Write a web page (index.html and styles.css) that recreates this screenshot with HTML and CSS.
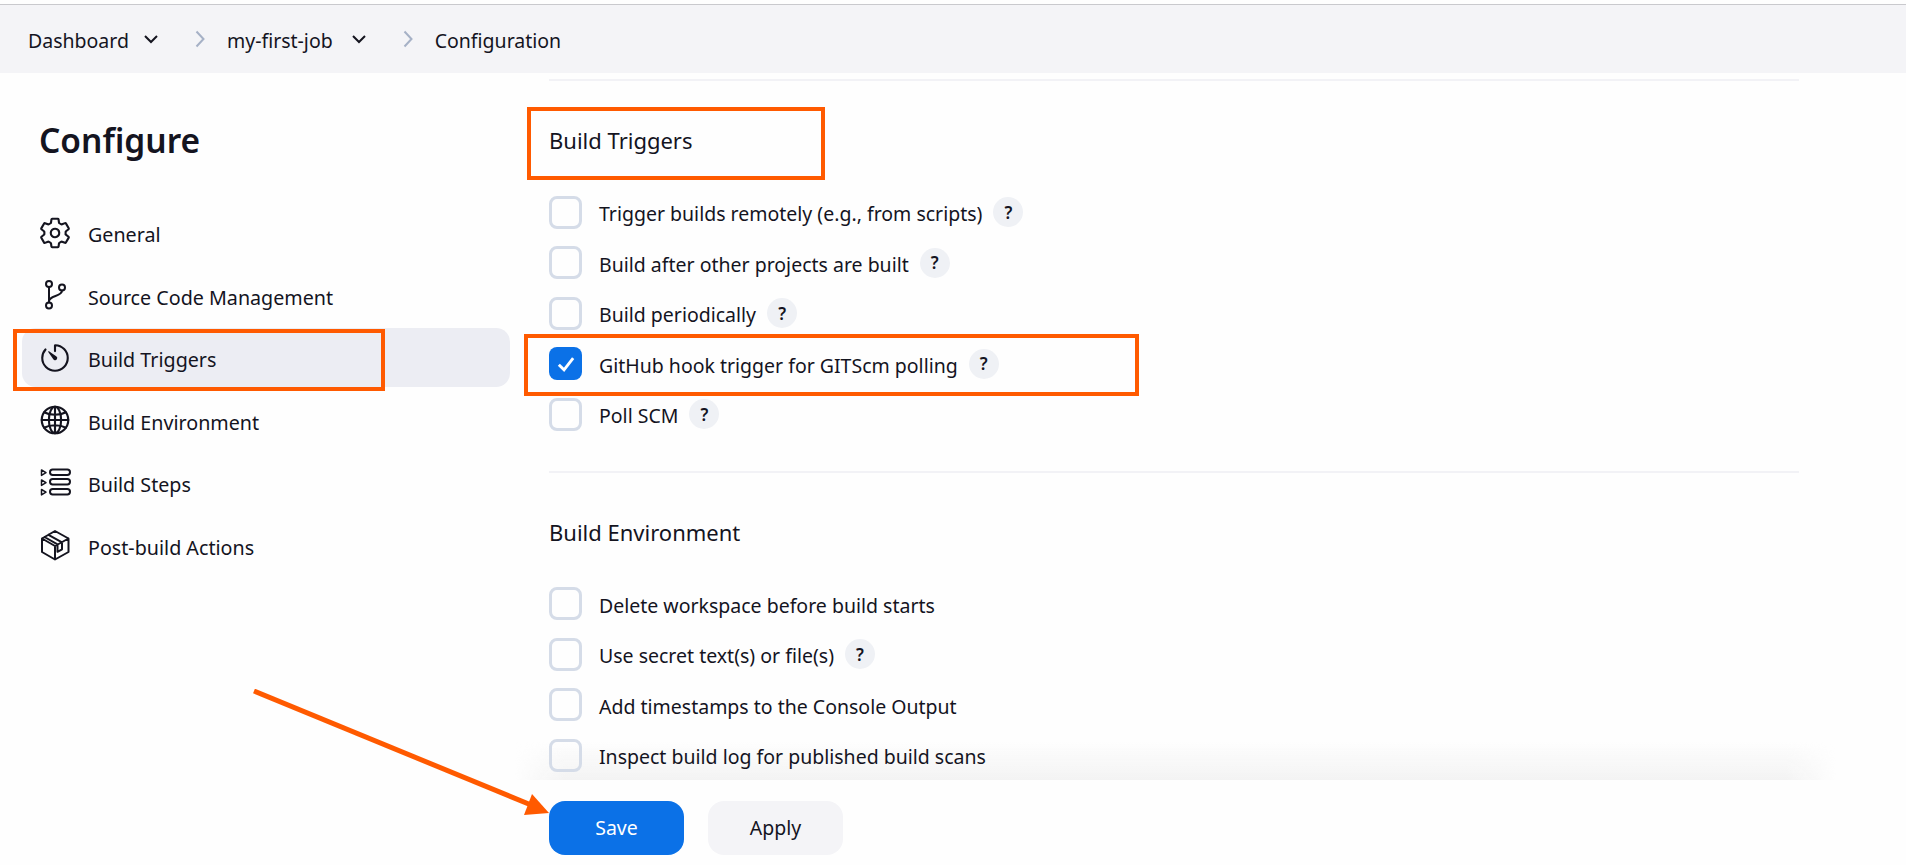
FILE: index.html
```html
<!DOCTYPE html>
<html lang="en">
<head>
  <meta charset="UTF-8" />
  <title>my-first-job Config</title>
  <link rel="stylesheet" href="styles.css">
</head>
<body>
  <div class="page">
    <div class="breadcrumbs">
      <span>Dashboard</span>
      <svg class="caret" viewBox="0 0 16 10"><path d="M2 2l6 6 6-6"/></svg>
      <svg class="sep" viewBox="0 0 10 18"><path d="M1.5 1.5L8.5 9l-7 7.5"/></svg>
      <span>my-first-job</span>
      <svg class="caret wide" viewBox="0 0 16 10"><path d="M2 2l6 6 6-6"/></svg>
      <svg class="sep" viewBox="0 0 10 18"><path d="M1.5 1.5L8.5 9l-7 7.5"/></svg>
      <span>Configuration</span>
    </div>

    <div class="content">
      <aside class="sidebar">
        <h1>Configure</h1>
        <nav class="nav">
          <a class="nav-item">
            <svg class="nav-icon" viewBox="0 0 512 512"><path d="M262.29 192.31a64 64 0 1057.4 57.4 64.13 64.13 0 00-57.4-57.4zM416.39 256a154.34 154.34 0 01-1.53 20.79l45.21 35.46a10.81 10.81 0 012.45 13.75l-42.77 74a10.81 10.81 0 01-13.14 4.59l-44.9-18.08a16.11 16.11 0 00-15.17 1.75A164.48 164.48 0 01325 400.8a15.94 15.94 0 00-8.82 12.14l-6.73 47.89a11.08 11.08 0 01-10.68 9.17h-85.54a11.11 11.11 0 01-10.69-8.87l-6.72-47.82a16.07 16.07 0 00-9-12.22 155.3 155.3 0 01-21.46-12.57 16 16 0 00-15.11-1.71l-44.89 18.07a10.81 10.81 0 01-13.14-4.58l-42.77-74a10.8 10.8 0 012.45-13.75l38.21-30a16.05 16.05 0 006-14.08c-.36-4.17-.58-8.33-.58-12.5s.21-8.27.58-12.35a16 16 0 00-6.07-13.94l-38.19-30A10.81 10.81 0 0149.48 186l42.77-74a10.81 10.81 0 0113.14-4.59l44.9 18.08a16.11 16.11 0 0015.17-1.75A164.48 164.48 0 01187 111.2a15.94 15.94 0 008.82-12.14l6.73-47.89A11.08 11.08 0 01213.23 42h85.54a11.11 11.11 0 0110.69 8.87l6.72 47.82a16.07 16.07 0 009 12.22 155.3 155.3 0 0121.46 12.57 16 16 0 0015.11 1.71l44.89-18.07a10.81 10.81 0 0113.14 4.58l42.77 74a10.8 10.8 0 01-2.45 13.75l-38.21 30a16.05 16.05 0 00-6.05 14.08c.33 4.14.55 8.3.55 12.47z"/></svg>
            <span>General</span>
          </a>
          <a class="nav-item">
            <svg class="nav-icon thin" viewBox="0 0 34 34"><circle cx="11" cy="6" r="3"/><circle cx="11" cy="27.5" r="3"/><circle cx="24" cy="9.5" r="3"/><path d="M11 9v15.5M24 12.5c0 6.500-13 4.500-13 11"/></svg>
            <span>Source Code Management</span>
          </a>
          <a class="nav-item active">
            <svg class="nav-icon" viewBox="0 0 512 512"><path d="M112.91 128A191.85 191.85 0 0064 254c-1.18 106.35 85.65 193.8 192 194 106.2.2 192-85.83 192-192 0-104.54-83.55-189.61-187.5-192a4.36 4.36 0 00-4.5 4.37V152"/><path class="solid" d="M233.38 278.63l-79-113a8.13 8.13 0 0111.32-11.32l113 79a32.5 32.5 0 01-37 53 33.21 33.21 0 01-7.32-7.68z"/></svg>
            <span>Build Triggers</span>
          </a>
          <a class="nav-item">
            <svg class="nav-icon" viewBox="0 0 512 512"><circle cx="256" cy="256" r="200"/><ellipse cx="256" cy="256" rx="92" ry="200"/><path d="M256 56v400M56 256h400M92 140c90 50 238 50 328 0M92 372c90-50 238-50 328 0"/></svg>
            <span>Build Environment</span>
          </a>
          <a class="nav-item">
            <svg class="nav-icon thin" viewBox="0 0 34 34"><path class="step" d="M3.500 4l4.500 2.700-4.500 2.700zM3.500 14l4.500 2.700-4.500 2.700zM3.500 23.500l4.500 2.700-4.500 2.700z"/><rect x="12" y="3.500" width="20" height="5.500" rx="2.700"/><rect x="12" y="13" width="20" height="5.500" rx="2.700"/><rect x="12" y="23" width="20" height="5.500" rx="2.700"/></svg>
            <span>Build Steps</span>
          </a>
          <a class="nav-item">
            <svg class="nav-icon thin" viewBox="0 0 34 34"><path d="M17 3l13.500 7.500V24L17 31.500 4 24V10.500zM4 10.500l13 7.500 13.500-7.500M17 18v13.500M10.500 6.800l13.500 7.500v7l-4.500 2.500v-7.500L6.500 9"/></svg>
            <span>Post-build Actions</span>
          </a>
        </nav>
      </aside>

      <main class="main">
        <hr class="rule">
        <h2>Build Triggers</h2>
        <div class="option"><span class="box"></span><span class="label">Trigger builds remotely (e.g., from scripts)</span><span class="help">?</span></div>
        <div class="option"><span class="box"></span><span class="label">Build after other projects are built</span><span class="help">?</span></div>
        <div class="option"><span class="box"></span><span class="label">Build periodically</span><span class="help">?</span></div>
        <div class="option">
          <span class="box checked"><svg viewBox="0 0 20 20"><path d="M4.500 10.500l4 4 7-9"/></svg></span>
          <span class="label">GitHub hook trigger for GITScm polling</span><span class="help">?</span>
        </div>
        <div class="option"><span class="box"></span><span class="label">Poll SCM</span><span class="help">?</span></div>

        <hr class="rule gap">
        <h2>Build Environment</h2>
        <div class="option"><span class="box"></span><span class="label">Delete workspace before build starts</span></div>
        <div class="option"><span class="box"></span><span class="label">Use secret text(s) or file(s)</span><span class="help">?</span></div>
        <div class="option"><span class="box"></span><span class="label">Add timestamps to the Console Output</span></div>
        <div class="option"><span class="box"></span><span class="label">Inspect build log for published build scans</span></div>

        <div class="actions">
          <button class="btn primary">Save</button>
          <button class="btn">Apply</button>
        </div>
      </main>
    </div>

    <!-- orange markup drawn over the screenshot -->
    <div class="mark mark-nav"></div>
    <div class="mark mark-title"></div>
    <div class="mark mark-hook"></div>
    <svg class="arrow" viewBox="0 0 310 130"><path class="arrow-line" d="M3 2L285 118"/><path class="arrow-head" d="M281 105L298 124L273 126z"/></svg>
  </div>
</body>
</html>
```

FILE: styles.css
```css
* {
  box-sizing: border-box;
}
body {
  margin: 0;
  font-family: "Noto Sans", Arial, sans-serif;
  font-size: 19.5px;
  color: #14141f;
  background: #fefefe;
}
.page {
  position: relative;
  width: 1906px;
  height: 865px;
  overflow: hidden;
  padding-top: 4px;
}

/* breadcrumb bar */
.breadcrumbs {
  display: flex;
  align-items: center;
  height: 69px;
  padding-left: 28px;
  background: #f4f4f7;
  border-top: 1px solid #c9c9cd;
}
.breadcrumbs span {
  padding-top: 3px;
}
.caret {
  width: 16px;
  height: 10px;
  margin-left: 14px;
  fill: none;
  stroke: #14141f;
  stroke-width: 2;
}
.caret.wide {
  margin-left: 18px;
}
.sep {
  width: 10px;
  height: 18px;
  margin: 0 22px 0 36px;
  fill: none;
  stroke: #a6b1c6;
  stroke-width: 2;
}

.content {
  display: flex;
}

/* left menu */
.sidebar {
  width: 527px;
  padding-left: 22px;
}
.sidebar h1 {
  margin: 42px 0 38px 17px;
  font-size: 33.5px;
  line-height: 50px;
  font-weight: 600;
}
.nav {
  display: flex;
  flex-direction: column;
  gap: 3.5px;
  width: 488px;
}
.nav-item {
  display: flex;
  align-items: center;
  gap: 16px;
  height: 59px;
  padding-left: 16px;
  border-radius: 14px;
  font-size: 19.7px;
}
.nav-item span {
  padding-top: 4px;
}
.nav-item.active {
  background: #ecedf3;
}
.nav-icon {
  flex: none;
  width: 34px;
  height: 34px;
  fill: none;
  stroke: #14141f;
  stroke-width: 32;
  stroke-linecap: round;
  stroke-linejoin: round;
}
.nav-icon.thin {
  stroke-width: 2;
}
.nav-icon .step {
  stroke-width: 1.5;
}
.nav-icon .solid {
  fill: #14141f;
  stroke: none;
}

/* form */
.main {
  width: 1250px;
  margin-left: 22px;
}
.rule {
  height: 2px;
  margin: 6px 0 0;
  border: 0;
  background: #f2f2f6;
}
.rule.gap {
  margin-top: 31px;
}
.main h2 {
  margin: 44px 0 32px;
  font-size: 22px;
  line-height: 30px;
  font-weight: 400;
}
.option {
  display: flex;
  align-items: center;
  height: 50.5px;
}
.label {
  padding-top: 3px;
}
.box {
  flex: none;
  width: 33px;
  height: 33px;
  margin-right: 17px;
  border: 3px solid #d5dce8;
  border-radius: 8px;
}
.box.checked {
  display: flex;
  align-items: center;
  justify-content: center;
  border: 0;
  background: #0b71e7;
}
.box.checked svg {
  width: 26px;
  height: 26px;
  fill: none;
  stroke: #fff;
  stroke-width: 2.2;
}
.help {
  display: flex;
  align-items: center;
  justify-content: center;
  flex: none;
  width: 30px;
  height: 30px;
  margin-left: 11px;
  border-radius: 50%;
  background: #eff1f5;
  font-size: 17px;
  font-weight: 600;
}

/* sticky save bar */
.actions {
  position: relative;
  display: flex;
  gap: 24px;
  margin-top: 20px;
}
.actions::before {
  content: "";
  position: absolute;
  z-index: -1;
  left: -34px;
  right: -37px;
  top: -60px;
  height: 39px;
  background: linear-gradient(rgba(243, 243, 243, 0), #f3f3f3);
  mask-image: linear-gradient(to right, transparent, #000 50px, #000 calc(100% - 50px), transparent);
}
.btn {
  width: 135px;
  height: 54px;
  border: 0;
  border-radius: 16px;
  background: #f4f4f7;
  color: #14141f;
  font: inherit;
}
.btn.primary {
  background: #0b71e7;
  color: #fff;
}

/* annotations */
.mark {
  position: absolute;
  border: 4px solid #ff5a00;
}
.mark-nav {
  left: 13px;
  top: 329px;
  width: 372px;
  height: 62px;
}
.mark-title {
  left: 527px;
  top: 107px;
  width: 298px;
  height: 73px;
}
.mark-hook {
  left: 524px;
  top: 334px;
  width: 615px;
  height: 62px;
}
.arrow {
  position: absolute;
  left: 251px;
  top: 689px;
  width: 310px;
  height: 130px;
}
.arrow-line {
  stroke: #ff5a00;
  stroke-width: 5;
}
.arrow-head {
  fill: #ff5a00;
}
```
